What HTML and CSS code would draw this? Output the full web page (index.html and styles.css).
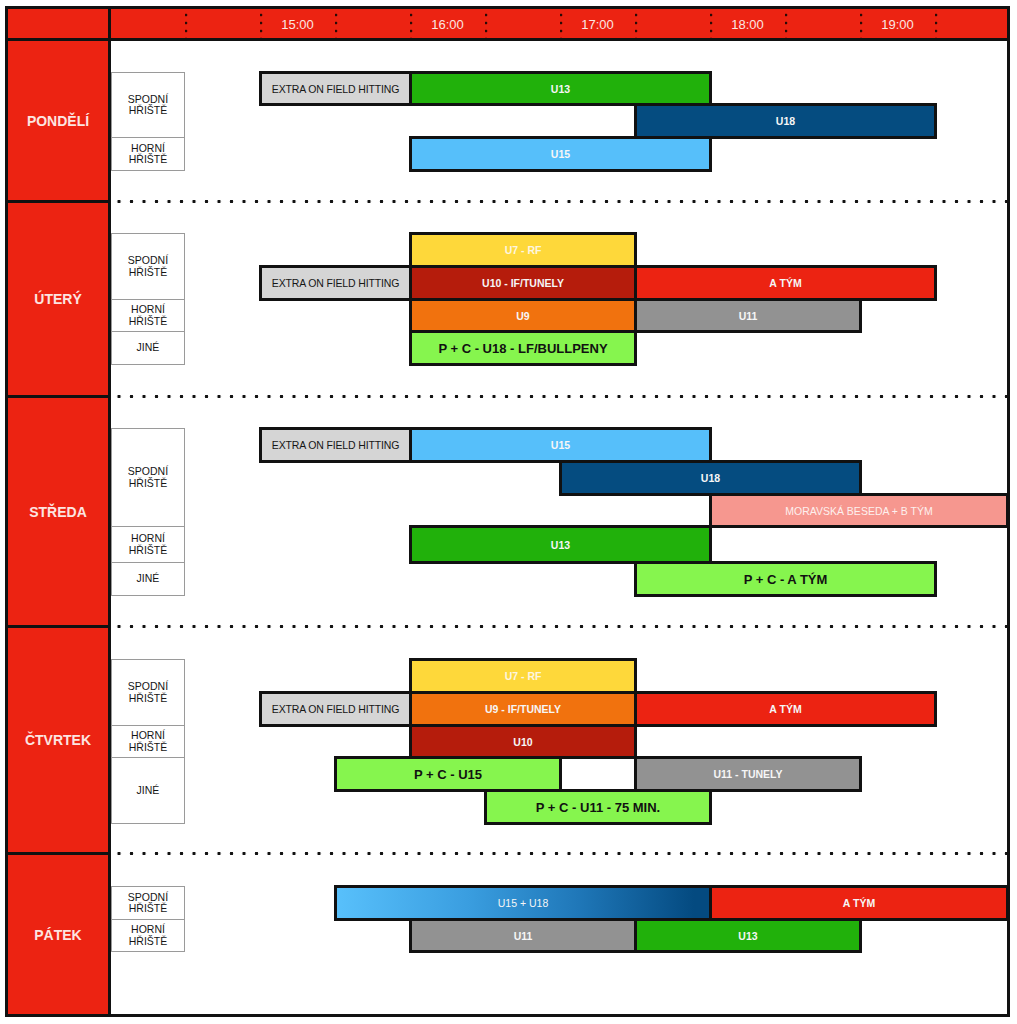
FILE: index.html
```html
<!DOCTYPE html>
<html lang="cs">
<head>
<meta charset="utf-8">
<title>Rozpis tréninků</title>
<link rel="stylesheet" href="styles.css">
</head>
<body>
<div class="schedule">
  <div class="corner"></div>
  <div class="timehead">
    <div class="hcell"></div>
    <div class="hcell tick"></div>
    <div class="hcell tick">15:00</div>
    <div class="hcell tick"></div>
    <div class="hcell tick">16:00</div>
    <div class="hcell tick"></div>
    <div class="hcell tick">17:00</div>
    <div class="hcell tick"></div>
    <div class="hcell tick">18:00</div>
    <div class="hcell tick"></div>
    <div class="hcell tick">19:00</div>
    <div class="hcell tick"></div>
  </div>

  <div class="day-label">PONDĚLÍ</div>
  <div class="day-chart mon">
    <div class="venue" style="grid-row:1/3">SPODNÍ<br>HŘIŠTĚ</div>
    <div class="venue" style="grid-row:3">HORNÍ<br>HŘIŠTĚ</div>
    <div class="bar extra" style="grid-column:3/5;grid-row:1">EXTRA ON FIELD HITTING</div>
    <div class="bar green" style="grid-column:5/9;grid-row:1">U13</div>
    <div class="bar navy" style="grid-column:8/12;grid-row:2">U18</div>
    <div class="bar sky" style="grid-column:5/9;grid-row:3">U15</div>
  </div>

  <div class="day-label sep">ÚTERÝ</div>
  <div class="day-chart tue dotted">
    <div class="venue" style="grid-row:1/3">SPODNÍ<br>HŘIŠTĚ</div>
    <div class="venue" style="grid-row:3">HORNÍ<br>HŘIŠTĚ</div>
    <div class="venue" style="grid-row:4">JINÉ</div>
    <div class="bar yellow" style="grid-column:5/8;grid-row:1">U7 - RF</div>
    <div class="bar extra" style="grid-column:3/5;grid-row:2">EXTRA ON FIELD HITTING</div>
    <div class="bar maroon" style="grid-column:5/8;grid-row:2">U10 - IF/TUNELY</div>
    <div class="bar red" style="grid-column:8/12;grid-row:2">A TÝM</div>
    <div class="bar orange" style="grid-column:5/8;grid-row:3">U9</div>
    <div class="bar gray" style="grid-column:8/11;grid-row:3">U11</div>
    <div class="bar lime" style="grid-column:5/8;grid-row:4">P + C - U18 - LF/BULLPENY</div>
  </div>

  <div class="day-label sep">STŘEDA</div>
  <div class="day-chart wed dotted">
    <div class="venue" style="grid-row:1/4">SPODNÍ<br>HŘIŠTĚ</div>
    <div class="venue" style="grid-row:4">HORNÍ<br>HŘIŠTĚ</div>
    <div class="venue" style="grid-row:5">JINÉ</div>
    <div class="bar extra" style="grid-column:3/5;grid-row:1">EXTRA ON FIELD HITTING</div>
    <div class="bar sky" style="grid-column:5/9;grid-row:1">U15</div>
    <div class="bar navy" style="grid-column:7/11;grid-row:2">U18</div>
    <div class="bar salmon" style="grid-column:9/13;grid-row:3">MORAVSKÁ BESEDA + B TÝM</div>
    <div class="bar green" style="grid-column:5/9;grid-row:4">U13</div>
    <div class="bar lime" style="grid-column:8/12;grid-row:5">P + C - A TÝM</div>
  </div>

  <div class="day-label sep">ČTVRTEK</div>
  <div class="day-chart thu dotted">
    <div class="venue" style="grid-row:1/3">SPODNÍ<br>HŘIŠTĚ</div>
    <div class="venue" style="grid-row:3">HORNÍ<br>HŘIŠTĚ</div>
    <div class="venue" style="grid-row:4/6">JINÉ</div>
    <div class="bar yellow" style="grid-column:5/8;grid-row:1">U7 - RF</div>
    <div class="bar extra" style="grid-column:3/5;grid-row:2">EXTRA ON FIELD HITTING</div>
    <div class="bar orange" style="grid-column:5/8;grid-row:2">U9 - IF/TUNELY</div>
    <div class="bar red" style="grid-column:8/12;grid-row:2">A TÝM</div>
    <div class="bar maroon" style="grid-column:5/8;grid-row:3">U10</div>
    <div class="bar lime" style="grid-column:4/7;grid-row:4">P + C - U15</div>
    <div class="bar gray" style="grid-column:8/11;grid-row:4">U11 - TUNELY</div>
    <div class="bar lime" style="grid-column:6/9;grid-row:5">P + C - U11 - 75 MIN.</div>
  </div>

  <div class="day-label sep">PÁTEK</div>
  <div class="day-chart fri dotted">
    <div class="venue" style="grid-row:1">SPODNÍ<br>HŘIŠTĚ</div>
    <div class="venue" style="grid-row:2">HORNÍ<br>HŘIŠTĚ</div>
    <div class="bar blend" style="grid-column:4/9;grid-row:1">U15 + U18</div>
    <div class="bar red" style="grid-column:9/13;grid-row:1">A TÝM</div>
    <div class="bar gray" style="grid-column:5/8;grid-row:2">U11</div>
    <div class="bar green" style="grid-column:8/11;grid-row:2">U13</div>
  </div>
</div>
</body>
</html>
```

FILE: styles.css
```css
html, body {
  margin: 0;
  padding: 0;
  background: #fff;
}

body {
  font-family: "Liberation Sans", Arial, Helvetica, sans-serif;
  color: #111;
}

.schedule {
  margin: 6px 0 0 5px;
  width: 999px;
  border: 3px solid #111;
  background: #111;
  display: grid;
  grid-template-columns: 100px 896px;
  column-gap: 3px;
}

.corner,
.timehead {
  height: 29px;
  background: #ec2312;
  border-bottom: 3px solid #111;
}

.timehead {
  display: grid;
  grid-template-columns: 74px repeat(10, 75px) 72px;
}

.hcell {
  display: flex;
  align-items: center;
  justify-content: center;
  font-size: 13px;
  color: #fbe6e2;
  padding-top: 1px;
}

.hcell.tick {
  background-image: radial-gradient(circle at 50% 50%, #2a0a06 1.1px, transparent 1.7px);
  background-size: 4px 8px;
  background-position: -1px 2px;
  background-repeat: repeat-y;
}

.day-label {
  background: #ec2312;
  color: #fce5e1;
  font-weight: bold;
  font-size: 14px;
  display: flex;
  align-items: center;
  justify-content: center;
}

.day-label.sep {
  border-top: 3px solid #111;
}

.day-chart {
  background: #fff;
  display: grid;
  grid-template-columns: 74px repeat(10, 75px) 72px;
  align-content: start;
}

.day-chart.dotted {
  background:
    radial-gradient(circle at 50% 50%, #111 1.5px, transparent 2px) 1.75px 0 / 12.5px 3px repeat-x,
    #fff;
}

.mon { padding: 31px 0 30px; grid-template-rows: 32px 33px 33px; }
.tue { padding: 33px 0 31px; grid-template-rows: 33px 33px 32px 33px; }
.wed { padding: 33px 0 30px; grid-template-rows: 33px 33px 32px 36px 33px; }
.thu { padding: 34px 0 29px; grid-template-rows: 33px 33px 32px 33px 33px; }
.fri { padding: 34px 0 63px; grid-template-rows: 33px 32px; }

.venue {
  grid-column: 1;
  border: 1px solid #9a9a9a;
  margin-bottom: -1px;
  background: #fff;
  display: flex;
  align-items: center;
  justify-content: center;
  text-align: center;
  font-size: 10.5px;
  line-height: 11.5px;
  color: #151515;
}

.bar {
  margin: -1px -2px -2px -1px;
  border: 3px solid #111;
  display: flex;
  align-items: center;
  justify-content: center;
  white-space: nowrap;
  font-size: 10.5px;
  font-weight: bold;
  color: #f6f6f6;
}

.extra {
  background: #d5d5d5;
  color: #161616;
  font-weight: normal;
  letter-spacing: -0.15px;
}

.green { background: #21b10b; }
.navy { background: #054c80; }
.sky { background: #56bffa; }
.yellow { background: #fed83a; color: #fdf6e0; }
.maroon { background: #b51c0c; }
.red { background: #ec2312; }
.orange { background: #f1720e; }
.gray { background: #929292; }
.salmon { background: #f6978f; font-weight: normal; color: #fdf0ee; }

.lime {
  background: #86f54e;
  color: #111;
  font-size: 13px;
}

.blend {
  background: linear-gradient(to right, #58c0fb 0%, #3a9ee0 35%, #1f77b8 65%, #044a80 96%);
  font-weight: normal;
}
```
